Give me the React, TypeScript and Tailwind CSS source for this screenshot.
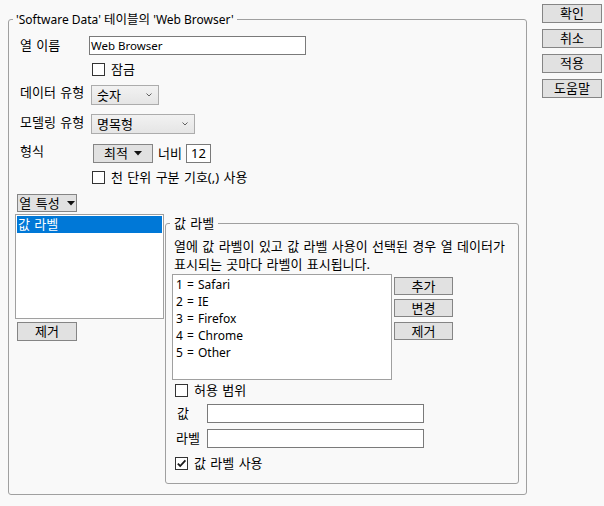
import React from "react";

function Check({ checked = false }: { checked?: boolean }) {
  return (
    <div className="w-[13px] h-[13px] border border-[#333333] bg-white flex items-center justify-center shrink-0">
      {checked && (
        <svg width="11" height="11" viewBox="0 0 11 11">
          <path d="M1.8 5.6 L4.2 8 L9.4 2.4" fill="none" stroke="#1a1a1a" strokeWidth="1.8" />
        </svg>
      )}
    </div>
  );
}

function Btn({ children, className = "" }: { children: React.ReactNode; className?: string }) {
  return (
    <div
      className={
        "bg-[#e1e1e1] border border-[#858585] flex items-center justify-center shrink-0 text-[13px] " +
        className
      }
    >
      {children}
    </div>
  );
}

function Tri() {
  return (
    <svg width="8" height="5" viewBox="0 0 8 5" className="shrink-0">
      <polygon points="0,0 8,0 4,4.5" fill="#111" />
    </svg>
  );
}

function Chevron() {
  return (
    <svg width="6" height="4" viewBox="0 0 6 4" className="shrink-0">
      <polyline points="0.5,0.5 3,3 5.5,0.5" fill="none" stroke="#606060" strokeWidth="1" />
    </svg>
  );
}

export default function App() {
  return (
    <div className="w-[604px] h-[506px] bg-[#f9f9f9] flex text-[12px] text-black leading-none [word-spacing:1px] font-['Noto_Sans','Noto_Sans_CJK_KR',sans-serif]">
      {/* main group */}
      <div className="ml-[8px] mt-[19px] w-[519px] h-[476px] border border-[#a0a0a0] rounded-[3px] relative shrink-0">
        <span className="absolute left-[4px] top-[-9px] px-[3px] bg-[#f9f9f9] leading-[17px] whitespace-nowrap [word-spacing:0px]">
          'Software Data' <span className="text-[12.5px]">테이블의</span> 'Web Browser'
        </span>
        <div className="flex flex-col">
          {/* 열 이름 */}
          <div className="mt-[16px] h-[19px] flex items-start">
            <span className="ml-[11px] w-[69px] text-[13px] leading-[14px] pt-[2px]">열 이름</span>
            <div className="w-[217px] h-[19px] border border-[#7a7a7a] bg-white flex items-center pl-[1px] leading-[17px] text-[11.5px] [word-spacing:0px]">
              Web Browser
            </div>
          </div>
          {/* 잠금 */}
          <div className="mt-[6px] h-[17px] flex items-center">
            <div className="ml-[83px]">
              <Check />
            </div>
            <span className="ml-[6px] text-[13px]">잠금</span>
          </div>
          {/* 데이터 유형 */}
          <div className="mt-[7px] h-[20px] flex items-start">
            <span className="ml-[11px] w-[71px] text-[13px] leading-[14px]">데이터 유형</span>
            <div className="w-[68px] h-[20px] border border-[#acacac] bg-gradient-to-b from-[#f2f2f2] to-[#e5e5e5] flex items-center justify-between pl-[5px] pr-[6px] text-[13px]">
              <span>숫자</span>
              <Chevron />
            </div>
          </div>
          {/* 모델링 유형 */}
          <div className="mt-[9px] h-[20px] flex items-start">
            <span className="ml-[11px] w-[71px] text-[13px] leading-[14px] pt-[1px]">모델링 유형</span>
            <div className="w-[104px] h-[20px] border border-[#acacac] bg-gradient-to-b from-[#f2f2f2] to-[#e5e5e5] flex items-center justify-between pl-[5px] pr-[6px] text-[13px]">
              <span>명목형</span>
              <Chevron />
            </div>
          </div>
          {/* 형식 */}
          <div className="mt-[10px] h-[19px] flex items-start">
            <span className="ml-[11px] w-[73px] text-[13px] leading-[14px]">형식</span>
            <Btn className="w-[60px] h-[19px] gap-[6px]">
              <span>최적</span>
              <Tri />
            </Btn>
            <span className="ml-[5px] self-center text-[13px]">너비</span>
            <div className="ml-[4px] w-[25px] h-[19px] border border-[#7a7a7a] bg-white flex items-center justify-center text-[13px]">
              12
            </div>
          </div>
          {/* 천 단위 */}
          <div className="mt-[6px] h-[17px] flex items-center">
            <div className="ml-[83px]">
              <Check />
            </div>
            <span className="ml-[6px] text-[13px]">천 단위 구분 기호(,) 사용</span>
          </div>
          {/* 열 특성 */}
          <div className="mt-[8px] h-[18px] flex">
            <Btn className="ml-[8px] w-[60px] h-[18px] gap-[7px]">
              <span>열 특성</span>
              <Tri />
            </Btn>
          </div>
          {/* lower area */}
          <div className="mt-[2px] flex items-start">
            <div className="ml-[6px] flex flex-col">
              <div className="w-[149px] h-[105px] border border-[#a0a0a0] bg-white p-[1px]">
                <div className="h-[17px] bg-[#0078d7] text-white flex items-center pl-[1px] text-[13px]">
                  값 라벨
                </div>
              </div>
              <Btn className="mt-[3px] ml-[2px] w-[60px] h-[19px]">제거</Btn>
            </div>
            {/* value label group */}
            <div className="ml-[1px] mt-[9px] w-[354px] h-[261px] border border-[#a0a0a0] rounded-[3px] relative">
              <span className="absolute left-[4px] top-[-9px] px-[4px] bg-[#f9f9f9] leading-[17px] text-[13px] whitespace-nowrap">
                값 라벨
              </span>
              <div className="flex flex-col">
                <div className="ml-[8px] mt-[13px] leading-[18px] text-[13px] whitespace-nowrap">
                  열에 값 라벨이 있고 값 라벨 사용이 선택된 경우 열 데이터가
                  <br />
                  표시되는 곳마다 라벨이 표시됩니다.
                </div>
                <div className="mt-[1px] flex items-start">
                  <div className="ml-[6px] w-[220px] h-[106px] border border-[#a0a0a0] bg-white pt-[1px] pl-[3px] leading-[17px]">
                    <div>1 = Safari</div>
                    <div>2 = IE</div>
                    <div>3 = Firefox</div>
                    <div>4 = Chrome</div>
                    <div>5 = Other</div>
                  </div>
                  <div className="ml-[2px] mt-[3px] flex flex-col">
                    <Btn className="w-[59px] h-[18px]">추가</Btn>
                    <Btn className="mt-[4px] w-[59px] h-[18px]">변경</Btn>
                    <Btn className="mt-[5px] w-[59px] h-[18px]">제거</Btn>
                  </div>
                </div>
                <div className="mt-[2px] h-[17px] flex items-center">
                  <div className="ml-[9px]">
                    <Check />
                  </div>
                  <span className="ml-[6px] text-[13px]">허용 범위</span>
                </div>
                <div className="mt-[5px] h-[19px] flex items-center">
                  <span className="ml-[11px] w-[30px] text-[13px]">값</span>
                  <div className="w-[217px] h-[19px] border border-[#7a7a7a] bg-white" />
                </div>
                <div className="mt-[6px] h-[19px] flex items-center">
                  <span className="ml-[10px] w-[31px] text-[13px]">라벨</span>
                  <div className="w-[217px] h-[19px] border border-[#7a7a7a] bg-white" />
                </div>
                <div className="mt-[7px] h-[17px] flex items-center">
                  <div className="ml-[9px]">
                    <Check checked />
                  </div>
                  <span className="ml-[6px] text-[13px]">값 라벨 사용</span>
                </div>
              </div>
            </div>
          </div>
        </div>
      </div>
      {/* right buttons */}
      <div className="ml-[15px] mt-[4px] flex flex-col gap-[6px]">
        <Btn className="w-[60px] h-[19px]">확인</Btn>
        <Btn className="w-[60px] h-[19px]">취소</Btn>
        <Btn className="w-[60px] h-[19px]">적용</Btn>
        <Btn className="w-[60px] h-[19px]">도움말</Btn>
      </div>
    </div>
  );
}
